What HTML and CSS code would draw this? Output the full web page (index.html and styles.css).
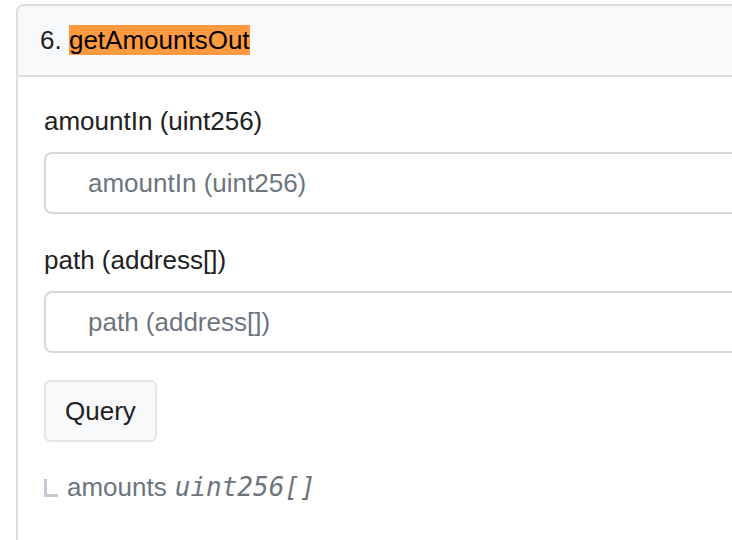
FILE: index.html
```html
<!DOCTYPE html>
<html>
<head>
<meta charset="utf-8">
<link rel="stylesheet" href="styles.css">
</head>
<body>
<div class="card">
  <div class="card-header">6. <mark class="hl">getAmountsOut</mark></div>
  <div class="card-body">
    <div class="group">
      <label class="label">amountIn (uint256)</label>
      <input class="input" type="text" placeholder="amountIn (uint256)">
    </div>
    <div class="group">
      <label class="label">path (address[])</label>
      <input class="input" type="text" placeholder="path (address[])">
    </div>
    <button class="btn">Query</button>
    <div class="output"><span class="elbow"></span><span class="out-name">amounts</span> <i class="out-type">uint256[]</i></div>
  </div>
</div>
</body>
</html>
```
FILE: styles.css
```css
html, body {
  margin: 0;
  padding: 0;
  background: #ffffff;
  overflow: hidden;
}
body {
  font-family: "Liberation Sans", Arial, sans-serif;
  font-size: 26px;
  line-height: 39px;
  color: #1e2022;
  height: 540px;
  box-sizing: border-box;
  padding: 4px 0 0 16px;
}
.card {
  box-sizing: border-box;
  height: 536px;
  border: 2px solid #dcdee0;
  border-right: none;
  border-bottom: none;
  border-radius: 8px 0 0 0;
}
.card-header {
  background: #f8f9fa;
  border-bottom: 2px solid #dcdee0;
  border-radius: 6px 0 0 0;
  padding: 15px 22px 15px 22px;
  color: #1e2022;
}
.hl {
  background: #ff9a40;
  color: #000;
  padding: 0;
}
.card-body {
  padding: 25px 0 0 26px;
}
.group {
  margin-bottom: 27px;
}
.label {
  display: block;
  margin-bottom: 11px;
}
.input {
  display: block;
  box-sizing: border-box;
  width: 100%;
  height: 62px;
  border: 2px solid #d5d9dd;
  border-right: none;
  border-radius: 8px 0 0 8px;
  padding: 0 42px;
  font-family: "Liberation Sans", Arial, sans-serif;
  font-size: 26px;
  color: #1e2022;
  background: #fff;
  outline: none;
}
.input::placeholder {
  color: #6c757d;
  opacity: 1;
}
.btn {
  display: block;
  box-sizing: border-box;
  height: 62px;
  padding: 0 19px;
  border: 2px solid #e3e6ea;
  border-radius: 6px;
  background: #f8f9fa;
  font-family: "Liberation Sans", Arial, sans-serif;
  font-size: 26px;
  color: #1e2022;
  margin-bottom: 26px;
}
.output {
  display: flex;
  align-items: baseline;
  color: #6c757d;
}
.elbow {
  display: inline-block;
  width: 11px;
  height: 15px;
  border-left: 3px solid #c3c9d2;
  border-bottom: 3px solid #c3c9d2;
  margin-right: 9px;
  align-self: center;
  position: relative;
  top: 0px;
}
.out-name {
  margin-right: 8px;
}
.out-type {
  font-family: "DejaVu Sans Mono", "Liberation Mono", monospace;
  font-size: 26px;
  font-style: italic;
  color: #6c757d;
}
```
